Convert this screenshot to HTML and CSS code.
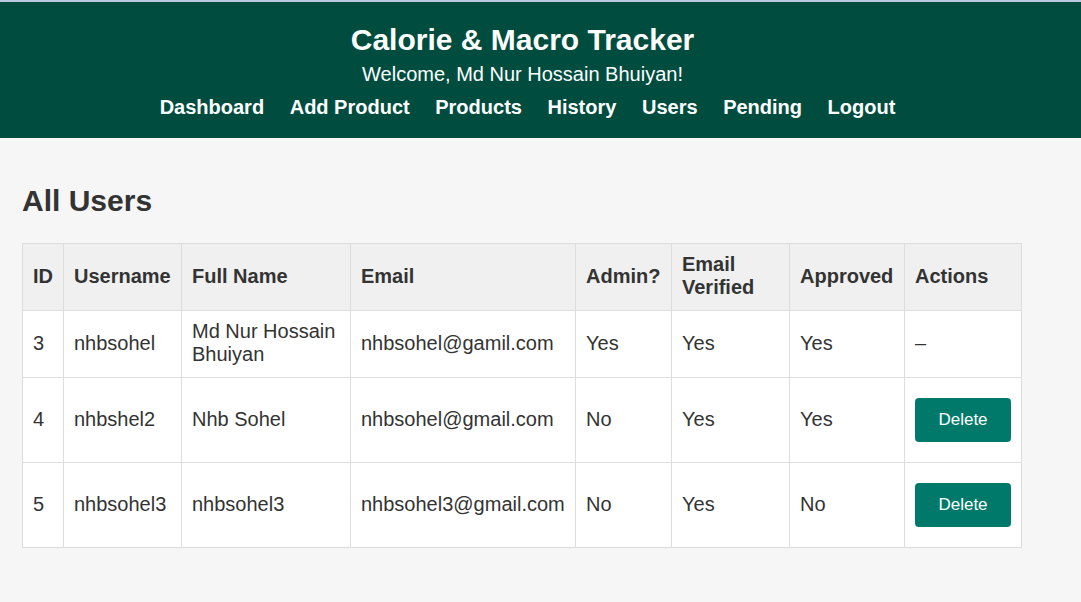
FILE: index.html
```html
<!DOCTYPE html>
<html lang="en">
<head>
<meta charset="utf-8">
<title>All Users</title>
<link rel="stylesheet" href="styles.css">
</head>
<body>
<div class="topline"></div>
<header class="site-header">
  <h1 class="site-title">Calorie &amp; Macro Tracker</h1>
  <p class="welcome">Welcome, Md Nur Hossain Bhuiyan!</p>
  <nav class="nav">
    <a href="#">Dashboard</a>
    <a href="#">Add Product</a>
    <a href="#">Products</a>
    <a href="#">History</a>
    <a href="#">Users</a>
    <a href="#">Pending</a>
    <a href="#">Logout</a>
  </nav>
</header>
<main class="main">
  <h2 class="page-title">All Users</h2>
  <table class="users">
    <colgroup>
      <col class="c-id"><col class="c-user"><col class="c-name"><col class="c-email">
      <col class="c-admin"><col class="c-verified"><col class="c-approved"><col class="c-actions">
    </colgroup>
    <thead>
      <tr>
        <th>ID</th><th>Username</th><th>Full Name</th><th>Email</th>
        <th>Admin?</th><th>Email Verified</th><th>Approved</th><th>Actions</th>
      </tr>
    </thead>
    <tbody>
      <tr>
        <td>3</td><td>nhbsohel</td><td>Md Nur Hossain Bhuiyan</td><td>nhbsohel@gamil.com</td>
        <td>Yes</td><td>Yes</td><td>Yes</td><td>–</td>
      </tr>
      <tr>
        <td>4</td><td>nhbshel2</td><td>Nhb Sohel</td><td>nhbsohel@gmail.com</td>
        <td>No</td><td>Yes</td><td>Yes</td><td><button class="btn-delete">Delete</button></td>
      </tr>
      <tr>
        <td>5</td><td>nhbsohel3</td><td>nhbsohel3</td><td>nhbsohel3@gmail.com</td>
        <td>No</td><td>Yes</td><td>No</td><td><button class="btn-delete">Delete</button></td>
      </tr>
    </tbody>
  </table>
</main>
</body>
</html>
```
FILE: styles.css
```css
* { box-sizing: border-box; }
html, body {
  margin: 0;
  padding: 0;
  background: #f6f6f6;
  font-family: "Liberation Sans", Arial, sans-serif;
  color: #333;
}
.topline {
  height: 2px;
  background: #b9c9e0;
}
.site-header {
  background: #004d40;
  color: #fff;
  text-align: center;
  padding: 21px 36px 20px 0;
  height: 136px;
}
.site-title {
  margin: 0 0 6px;
  font-size: 30px;
  font-weight: bold;
  line-height: 34px;
}
.welcome {
  margin: 0 0 10px;
  font-size: 20px;
  line-height: 23px;
}
.nav {
  padding-left: 10px;
  font-size: 20px;
  line-height: 23px;
}
.nav a {
  color: #fff;
  font-weight: bold;
  text-decoration: none;
  margin: 0 10px;
}
.main {
  padding: 45px 22px;
}
.page-title {
  margin: 0 0 25px;
  font-size: 30px;
  line-height: 35px;
  font-weight: bold;
}
.users {
  border-collapse: collapse;
  table-layout: fixed;
  width: 999px;
  background: #fff;
  font-size: 20px;
  line-height: 23px;
}
.users th,
.users td {
  border: 1px solid #ddd;
  padding: 9px 10px 11px;
  text-align: left;
  vertical-align: middle;
}
.users th {
  background: #f0f0f0;
  font-weight: bold;
}
.c-id { width: 41px; }
.c-user { width: 118px; }
.c-name { width: 169px; }
.c-email { width: 225px; }
.c-admin { width: 96px; }
.c-verified { width: 118px; }
.c-approved { width: 115px; }
.c-actions { width: 117px; }
.btn-delete {
  display: inline-block;
  vertical-align: middle;
  margin: 11px 0 9px;
  width: 96px;
  height: 44px;
  border: none;
  border-radius: 4px;
  background: #00796b;
  color: #fff;
  font-family: "Liberation Sans", Arial, sans-serif;
  font-size: 17px;
  cursor: pointer;
}
```
